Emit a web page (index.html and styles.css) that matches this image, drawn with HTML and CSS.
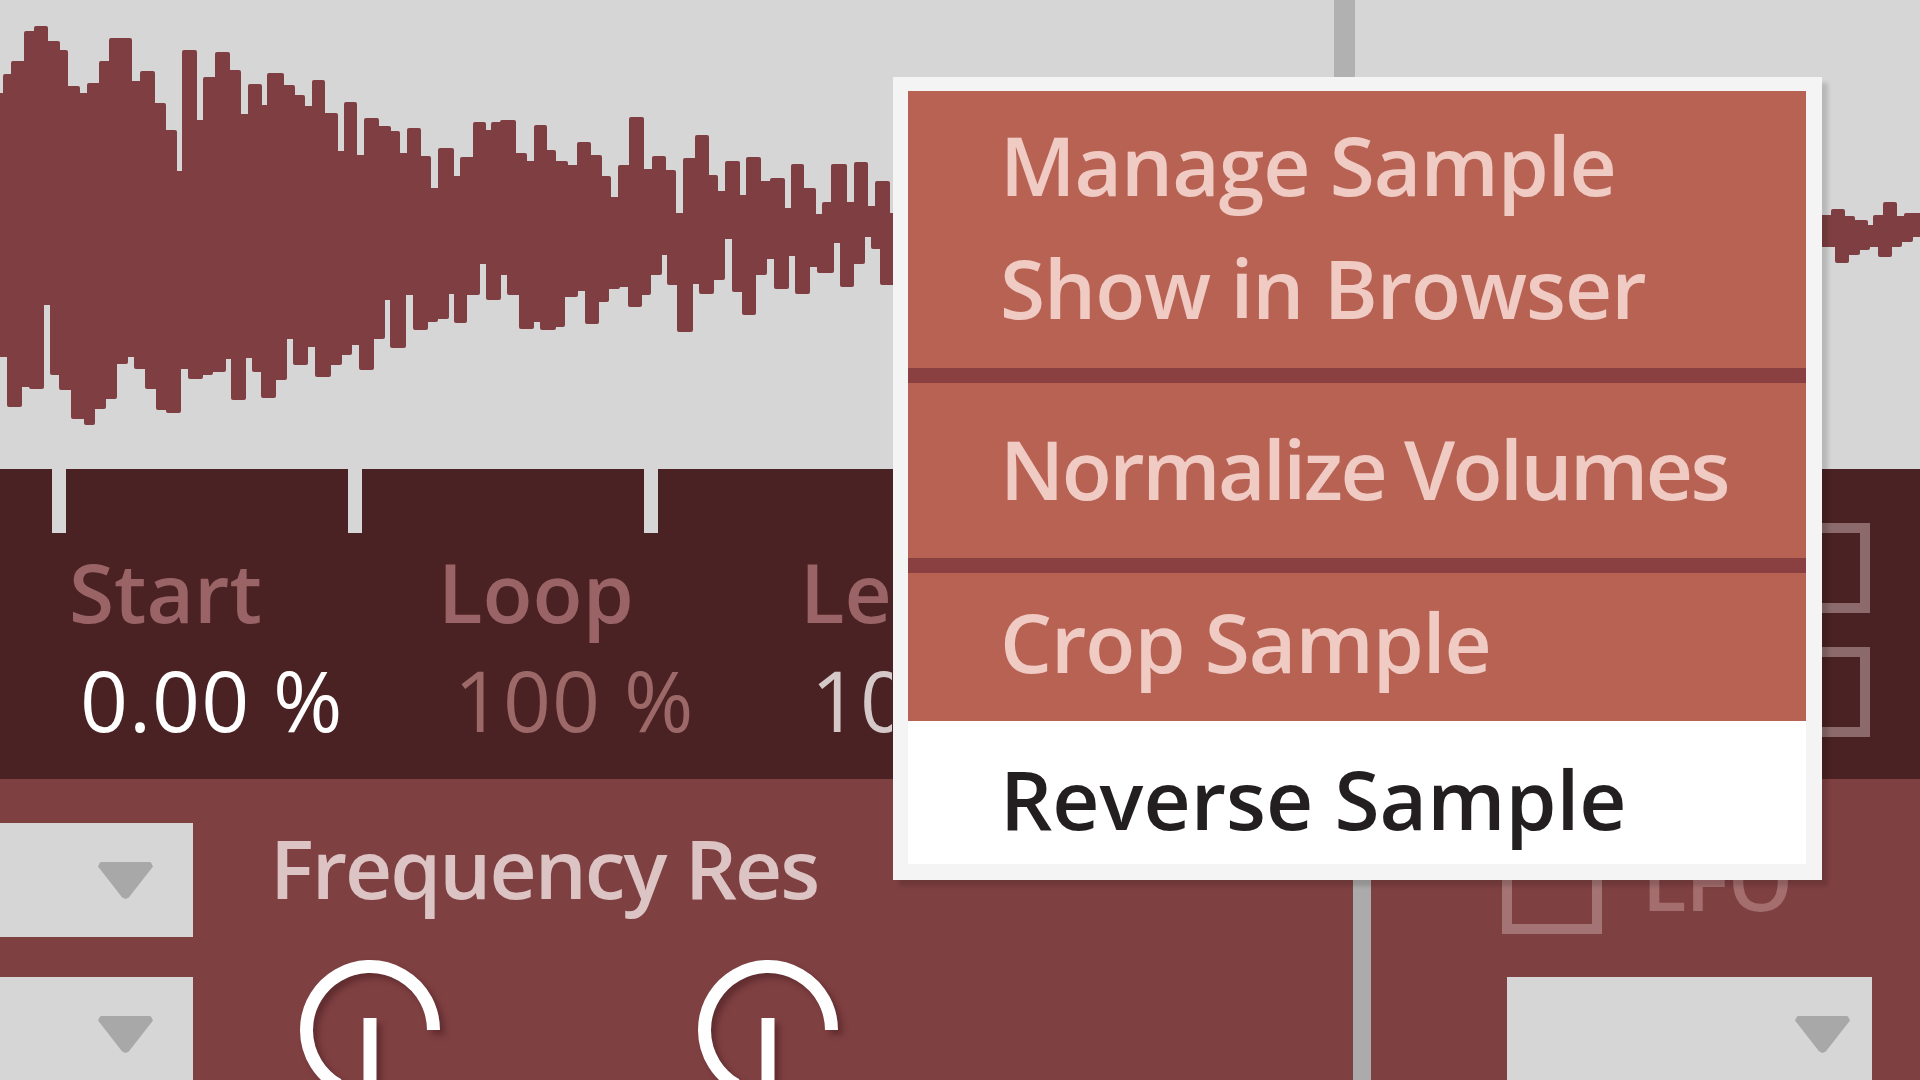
FILE: index.html
```html
<!DOCTYPE html>
<html lang="en">
<head>
  <meta charset="UTF-8">
  <meta name="viewport" content="width=device-width, initial-scale=1.0">
  <title>Sampler - Sample Menu</title>
  <link rel="stylesheet" href="styles.css">
</head>
<body>
  <div class="sampler">

    <!-- waveform display -->
    <section class="wave-panel">
      <svg class="wave" width="1920" height="469" viewBox="0 0 1920 469">
        <path class="wave-shape" d="M0 95 H5 V76 H13 V63 H26 V33 H36 V28 H46 V43 H58 V52 H66 V88 H78 V95 H89 V85 H101 V63 H111 V40 H130 V83 H142 V73 H153 V105 H164 V132 H175 V173 H184 V52 H195 V122 H205 V79 H217 V54 H228 V72 H239 V116 H250 V86 H260 V107 H269 V75 H282 V87 H293 V97 H303 V108 H314 V82 H323 V115 H336 V153 H346 V104 H355 V157 H366 V120 H377 V128 H389 V133 H398 V155 H409 V130 H419 V158 H429 V190 H440 V150 H452 V178 H462 V159 H475 V124 H484 V132 H493 V124 H502 V122 H514 V155 H525 V163 H536 V127 H545 V152 H554 V163 H566 V167 H579 V144 H589 V157 H600 V178 H609 V199 H620 V167 H631 V119 H642 V171 H654 V158 H664 V172 H674 V215 H685 V160 H697 V137 H707 V177 H716 V193 H727 V163 H738 V197 H748 V159 H759 V183 H772 V180 H783 V210 H793 V166 H802 V190 H814 V216 H824 V204 H833 V166 H845 V204 H856 V164 H866 V208 H877 V183 H888 V215 H893 L1822 217 H1833 V211 H1843 V218 H1853 V222 H1866 V227 H1875 V217 H1885 V204 H1895 V218 H1906 V215 H1920 V235 H1911 V240 H1900 V245 H1890 V255 H1880 V245 H1868 V248 H1858 V253 H1847 V261 H1837 V245 H1822 L893 283 H882 V247 H873 V235 H863 V262 H852 V285 H842 V241 H832 V271 H819 V265 H808 V292 H797 V254 H787 V287 H776 V257 H765 V273 H754 V313 H744 V290 H734 V237 H723 V278 H712 V292 H701 V282 H691 V330 H679 V283 H669 V253 H660 V273 H649 V293 H640 V305 H630 V285 H618 V287 H607 V300 H597 V322 H587 V289 H576 V295 H563 V325 H554 V328 H542 V320 H532 V327 H521 V293 H509 V273 H499 V298 H488 V262 H478 V293 H465 V321 H456 V292 H447 V317 H436 V320 H426 V328 H415 V293 H404 V346 H392 V298 H383 V337 H372 V368 H361 V343 H350 V353 H340 V363 H329 V375 H317 V345 H306 V363 H295 V337 H285 V378 H274 V396 H263 V370 H254 V356 H244 V398 H233 V357 H224 V370 H211 V373 H201 V377 H190 V367 H179 V411 H168 V408 H158 V387 H147 V367 H136 V355 H126 V362 H115 V397 H104 V407 H93 V423 H86 V417 H73 V388 H61 V373 H52 V303 H42 V387 H31 V385 H20 V405 H9 V355 H0 Z"/>
      </svg>
      <div class="playhead"></div>
    </section>

    <!-- start / loop / length -->
    <section class="param-strip">
      <div class="strip-main">
        <div class="ruler">
          <span class="tick"></span>
          <span class="tick"></span>
          <span class="tick"></span>
          <span class="tick"></span>
        </div>
        <div class="params">
          <div class="param">
            <div class="param-label">Start</div>
            <div class="param-value active">0.00 %</div>
          </div>
          <div class="param">
            <div class="param-label">Loop</div>
            <div class="param-value loop">100 %</div>
          </div>
          <div class="param cut">
            <div class="param-label">Length</div>
            <div class="param-value light">100 %</div>
          </div>
        </div>
      </div>
      <div class="toggles">
        <span class="toggle"></span>
        <span class="toggle"></span>
      </div>
    </section>

    <!-- filter and modulation -->
    <section class="lower-panel">
      <div class="select-col">
        <div class="dropdown"><span class="arrow"></span></div>
        <div class="dropdown"><span class="arrow"></span></div>
      </div>

      <div class="filter">
        <div class="filter-label">Frequency Res</div>
        <div class="knobs">
          <svg class="knob" width="160" height="160" viewBox="0 0 160 160">
            <path d="M143.5 80 A63.5 63.5 0 1 0 48.2 135" />
            <line x1="80" y1="68" x2="80" y2="160" />
          </svg>
          <svg class="knob" width="160" height="160" viewBox="0 0 160 160">
            <path d="M143.5 80 A63.5 63.5 0 1 0 48.2 135" />
            <line x1="80" y1="68" x2="80" y2="160" />
          </svg>
        </div>
      </div>

      <div class="divider"></div>

      <div class="mod">
        <div class="lfo">
          <span class="checkbox"></span>
          <span class="lfo-label">LFO</span>
        </div>
        <div class="dropdown wide"><span class="arrow"></span></div>
      </div>
    </section>

    <!-- right-click menu -->
    <div class="context-menu">
      <div class="menu-item first">Manage Sample<br>Show in Browser</div>
      <div class="menu-item sep normalize">Normalize Volumes</div>
      <div class="menu-item sep crop">Crop Sample</div>
      <div class="menu-item selected">Reverse Sample</div>
    </div>

  </div>
</body>
</html>
```

FILE: styles.css
```css
* {
  box-sizing: border-box;
}

body {
  margin: 0;
  overflow: hidden;
  background: #7f4042;
  font-family: "Open Sans", "Noto Sans", sans-serif;
}

.sampler {
  position: relative;
  width: 1920px;
  height: 1080px;
  overflow: hidden;
}

/* waveform */
.wave-panel {
  position: relative;
  height: 469px;
  background: #d6d6d6;
}
.wave {
  display: block;
}
.wave-shape {
  fill: #7f3f42;
  stroke: #7f3f42;
  stroke-width: 4;
  stroke-linejoin: round;
}
.playhead {
  position: absolute;
  left: 1334px;
  top: 0;
  width: 21px;
  height: 100%;
  background: #b1b1b1;
}

/* start / loop strip */
.param-strip {
  display: flex;
  height: 310px;
  background: #4b2223;
}
.strip-main {
  flex: 1;
}
.ruler {
  display: flex;
  gap: 282px;
  padding-left: 52px;
}
.tick {
  width: 14px;
  height: 64px;
  background: #d6d6d6;
}
.params {
  display: grid;
  grid-template-columns: 369px 362px 92px;
  padding-left: 69px;
  margin-top: 17px;
}
.param.cut {
  overflow: hidden;
  white-space: nowrap;
}
.param-label {
  font-size: 82px;
  font-weight: 600;
  line-height: 82px;
  color: #9a6466;
}
.param-value {
  margin-top: 26px;
  padding-left: 11px;
  font-size: 84px;
  font-weight: 500;
  line-height: 84px;
  color: #9c6868;
  letter-spacing: 1px;
}
.param-value.loop {
  padding-left: 16px;
}
.param-value.active {
  color: #ffffff;
}
.param-value.light {
  color: #d4c8c8;
}
.toggles {
  display: flex;
  flex-direction: column;
  gap: 34px;
  padding-top: 54px;
  margin-right: 50px;
}
.toggle {
  width: 90px;
  height: 90px;
  border: 10px solid #8c6a6b;
}

/* lower panel */
.lower-panel {
  display: flex;
  height: 301px;
  background: #7f4042;
  overflow: hidden;
}
.select-col {
  display: flex;
  flex-direction: column;
  gap: 40px;
  width: 193px;
  padding-top: 44px;
}
.dropdown {
  position: relative;
  height: 114px;
  background: #d6d6d6;
  flex-shrink: 0;
}
.arrow {
  position: absolute;
  right: 40px;
  top: 39px;
  width: 55px;
  height: 37px;
  background: #a8a8a8;
  clip-path: polygon(4% 0, 96% 0, 100% 12%, 56% 96%, 50% 100%, 44% 96%, 0 12%);
  border-radius: 4px;
}
.filter {
  flex: 1;
  padding-left: 77px;
  padding-top: 47px;
}
.filter-label {
  font-size: 82px;
  font-weight: 600;
  line-height: 82px;
  color: #dcc4c4;
  letter-spacing: -2px;
}
.knobs {
  display: flex;
  gap: 238px;
  margin-top: 42px;
  padding-left: 20px;
}
.knob {
  flex-shrink: 0;
  fill: none;
  stroke: #ffffff;
  stroke-width: 13;
  filter: drop-shadow(5px 5px 3px rgba(40, 10, 12, 0.35));
}
.divider {
  width: 18px;
  background: #ababab;
}
.mod {
  width: 549px;
  padding-left: 131px;
  padding-top: 55px;
}
.lfo {
  display: flex;
  gap: 40px;
}
.checkbox {
  width: 100px;
  height: 100px;
  border: 10px solid #a47474;
}
.lfo-label {
  margin-top: 4px;
  font-size: 82px;
  font-weight: 600;
  line-height: 82px;
  color: #a46d6e;
  letter-spacing: -1px;
}
.dropdown.wide {
  width: 365px;
  margin-top: 43px;
  margin-left: 5px;
}
.dropdown.wide .arrow {
  right: 22px;
}

/* context menu */
.context-menu {
  position: absolute;
  left: 893px;
  top: 77px;
  width: 929px;
  padding: 14px 16px 16px 15px;
  background: #f4f4f4;
  box-shadow: 6px 6px 4px rgba(0, 0, 0, 0.14);
}
.menu-item {
  display: flex;
  flex-direction: column;
  justify-content: center;
  padding-left: 92px;
  background: #b86254;
  color: #efcbc4;
  font-size: 82px;
  font-weight: 600;
  line-height: 123px;
  letter-spacing: -1px;
}
.menu-item.first {
  height: 277px;
  padding-bottom: 8px;
}
.menu-item.sep {
  height: 190px;
  border-top: 15px solid #8a3f40;
}
.menu-item.normalize {
  padding-bottom: 4px;
  letter-spacing: -2.5px;
}
.menu-item.crop {
  height: 163px;
  padding-bottom: 12px;
}
.menu-item.selected {
  height: 143px;
  padding-top: 12px;
  background: #ffffff;
  color: #231f20;
  letter-spacing: 0;
}
```
